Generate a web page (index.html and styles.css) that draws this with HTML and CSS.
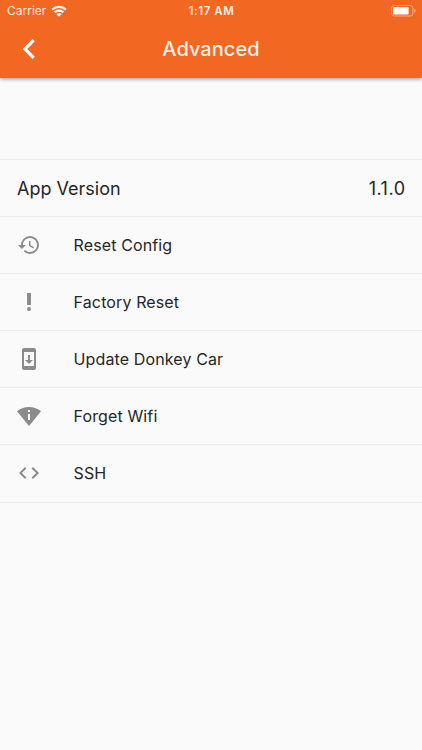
FILE: index.html
```html
<!DOCTYPE html>
<html lang="en">
<head>
<meta charset="utf-8">
<title>Advanced</title>
<link rel="stylesheet" href="styles.css">
</head>
<body>
<header class="top">
  <div class="status">
    <div class="carrier"><span class="carrier-name">Carrier</span>
      <svg class="wifi" viewBox="0 0 16 12"><g fill="none" stroke="currentColor" stroke-width="2.2"><path d="M1.2 4.6a9.8 9.8 0 0 1 13.6 0"/><path d="M3.7 7.4a6.2 6.2 0 0 1 8.6 0"/></g><path fill="currentColor" d="M5.5 9.3a3.6 3.6 0 0 1 5 0L8 11.8z"/></svg>
    </div>
    <div class="clock">1:17 AM</div>
    <svg class="battery" viewBox="0 0 25 12"><rect x=".5" y=".5" width="21.5" height="10.5" rx="2.8" fill="none" stroke="#fff" stroke-opacity=".45"/><rect x="2" y="2" width="15.6" height="7.5" rx="1.2" fill="#fff"/><path d="M23.4 4v3.7q1.2-.5 1.2-1.85T23.4 4z" fill="#fff" fill-opacity=".55"/></svg>
  </div>
  <div class="bar">
    <svg class="icon back" viewBox="0 0 24 24"><path d="M17.8 4.3L15.5 2 5.7 12l9.8 10 2.3-2.3L10.3 12z"/></svg>
    <h1 class="title">Advanced</h1>
  </div>
</header>
<main class="list">
  <div class="row version"><span>App Version</span><span class="version-number">1.1.0</span></div>
  <div class="row"><svg class="icon" viewBox="0 0 24 24"><path d="M13 3a9 9 0 0 0-9 9H1l3.89 3.89.07.14L9 12H6c0-3.87 3.13-7 7-7s7 3.13 7 7-3.13 7-7 7c-1.93 0-3.68-.79-4.94-2.06l-1.42 1.42A8.95 8.95 0 0 0 13 21a9 9 0 0 0 0-18zm-1 5v5l4.28 2.54.72-1.21-3.5-2.08V8z"/></svg><span>Reset Config</span></div>
  <div class="row"><svg class="icon" viewBox="0 0 24 24"><circle cx="12" cy="19" r="2"/><path d="M10 3h4v12h-4z"/></svg><span>Factory Reset</span></div>
  <div class="row"><svg class="icon" viewBox="0 0 24 24"><path d="M17 1.01L7 1c-1.1 0-2 .9-2 2v18c0 1.1.9 2 2 2h10c1.1 0 2-.9 2-2V3c0-1.1-.9-1.99-2-1.99zM17 19H7V5h10v14zm-1-6h-3V8h-2v5H8l4 4 4-4z"/></svg><span>Update Donkey Car</span></div>
  <div class="row"><svg class="icon" viewBox="0 0 24 24"><path d="M12 3C6.95 3 3.15 4.85 0 7.23L12 22 24 7.25C20.85 4.87 17.05 3 12 3zm1 13h-2v-6h2v6zm-2-8V6h2v2h-2z"/></svg><span>Forget Wifi</span></div>
  <div class="row"><svg class="icon" viewBox="0 0 24 24"><path d="M9.4 16.6L4.8 12l4.6-4.6L8 6l-6 6 6 6 1.4-1.4zm5.2 0l4.6-4.6-4.6-4.6L16 6l6 6-6 6-1.4-1.4z"/></svg><span>SSH</span></div>
</main>
</body>
</html>
```
FILE: styles.css
```css
body {
  margin: 0;
  min-height: 750px;
  background: #fafafa;
  color: #262626;
  font-family: Inter, sans-serif;
}
.top {
  height: 78px;
  background: #f26722;
  color: #fff;
  box-shadow: 0 1px 4px rgba(0, 0, 0, .4);
}
.status {
  height: 21px;
  display: grid;
  grid-template-columns: 1fr auto 1fr;
  align-items: center;
  padding: 0 6px 0 7px;
  box-sizing: border-box;
  font-size: 12px;
  color: #ffece0;
}
.carrier { display: flex; align-items: center; gap: 5px; }
.carrier-name { letter-spacing: 0; }
.wifi { width: 16px; height: 12px; color: #fff; }
.clock { font-size: 11.5px; font-weight: 600; letter-spacing: .6px; }
.battery { width: 25px; height: 12px; justify-self: end; }
.bar {
  height: 56px;
  display: grid;
  grid-template-columns: 24px 1fr 24px;
  align-items: center;
  padding: 0 17px;
}
.title {
  margin: 0;
  text-align: center;
  font-size: 20px;
  font-weight: 500;
  letter-spacing: .05px;
  color: #fff0e6;
}
.icon { display: block; width: 24px; height: 24px; fill: #8b8b8b; }
.back { fill: #fff; }
.list { margin-top: 81px; border-top: 1px solid #ececec; }
.row {
  height: 57.1px;
  box-sizing: border-box;
  border-bottom: 1px solid #ececec;
  display: flex;
  align-items: center;
  gap: 32.6px;
  padding: 0 17px;
  font-size: 16px;
  letter-spacing: .12px;
}
.row:last-child { height: 57.4px; padding-bottom: 1px; }
.version { justify-content: space-between; font-size: 18px; letter-spacing: 0; }
.version-number { letter-spacing: .5px; margin-right: -.5px; }
```
